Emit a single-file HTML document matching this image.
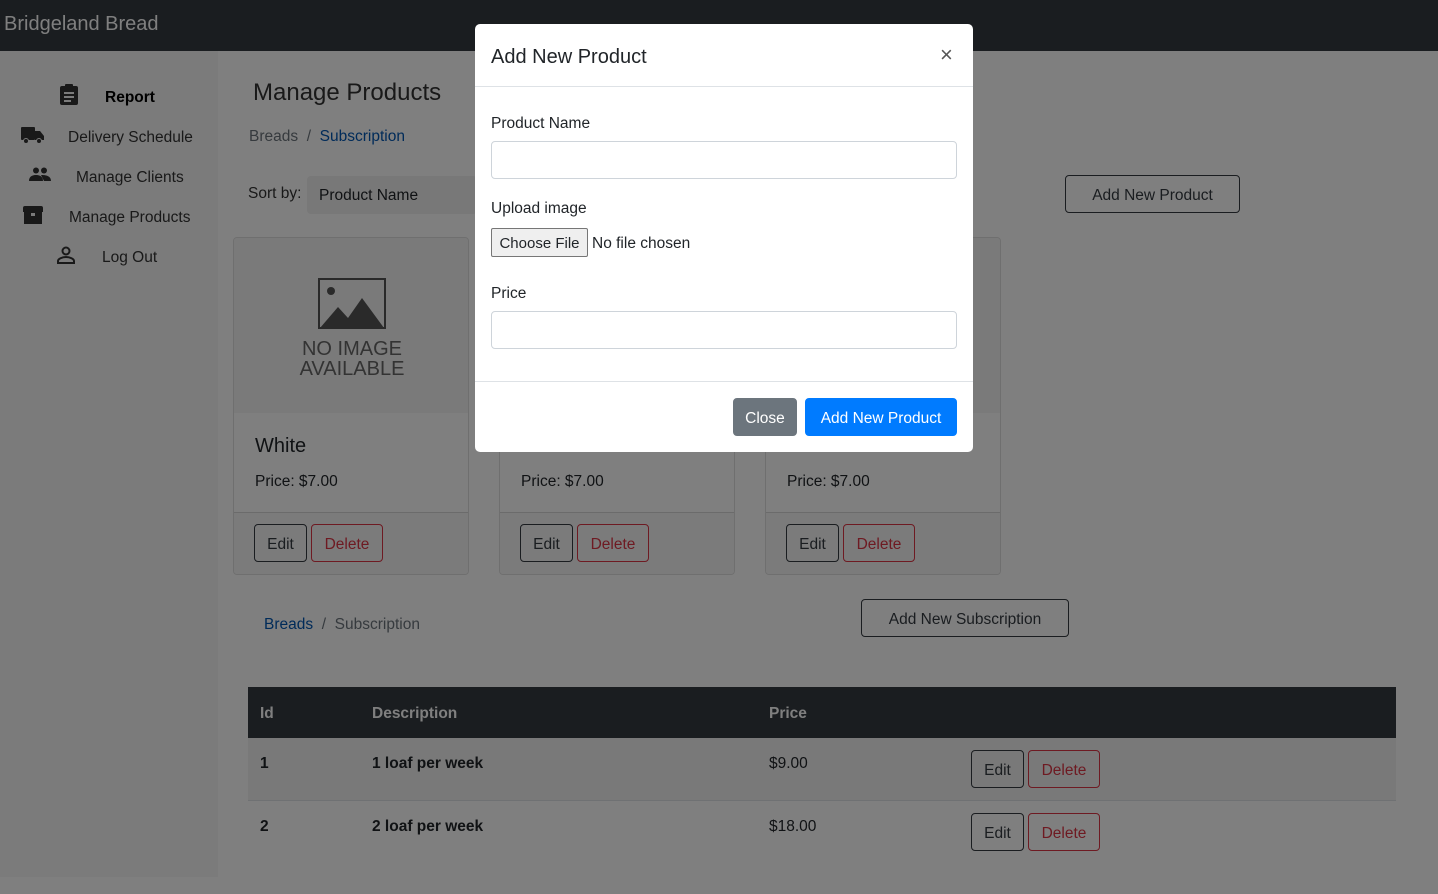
<!DOCTYPE html>
<html><head><style>
*{box-sizing:border-box;margin:0;padding:0}
body{width:1438px;height:894px;overflow:hidden;font-family:"Liberation Sans",sans-serif;background:#fff;position:relative;color:#212529}
.nav{position:absolute;left:0;top:0;width:1438px;height:51px;background:#343a40}
.nav span{position:absolute;left:4px;top:13px;font-size:20px;color:#fff}
.side{position:absolute;left:0;top:51px;width:218px;height:826px;background:#f6f6f6}
.si{position:absolute;font-size:15.5px;color:#333;margin-top:2px}
.abs{position:absolute}
.t{margin-top:2px}
.btn{position:absolute;border:1px solid #343a40;border-radius:4px;font-size:15.5px;display:flex;align-items:center;justify-content:center;color:#343a40;background:transparent;padding-top:3px;white-space:nowrap}
.del{border-color:#dc3545;color:#dc3545}
.card{position:absolute;width:236px;height:338px;border:1px solid rgba(0,0,0,.13);border-radius:4px;top:237px;overflow:hidden}
.card .img{height:175px;background:#f5f5f5}
.card .ft{position:absolute;left:0;right:0;top:274px;height:64px;background:#f7f7f7;border-top:1px solid rgba(0,0,0,.13)}
.ov{position:absolute;left:0;top:0;width:1438px;height:894px;background:rgba(0,0,0,.5)}
.modal{position:absolute;left:475px;top:24px;width:498px;height:428px;background:#fff;border-radius:5px}
.inp{position:absolute;left:16px;width:466px;height:38px;border:1px solid #ced4da;border-radius:4px}
.lbl{position:absolute;left:16px;font-size:15.5px;color:#212529;margin-top:2px}
</style></head><body>
<div class="nav"><span>Bridgeland Bread</span></div>
<div class="side">
<svg class="abs" style="left:60px;top:33px" width="18" height="21" viewBox="0 0 18 21"><rect x="0" y="2" width="18" height="19" rx="2" fill="#333"/><rect x="5" y="0" width="8" height="4" rx="1" fill="#333"/><rect x="4" y="8" width="10" height="2" fill="#f6f6f6"/><rect x="4" y="12" width="10" height="2" fill="#f6f6f6"/><rect x="4" y="16" width="7" height="2" fill="#f6f6f6"/></svg>
<div class="si" style="left:105px;top:36px;font-weight:bold;color:#000">Report</div>
<svg class="abs" style="left:21px;top:76px" width="23" height="17" viewBox="0 0 23 17"><rect x="0" y="0" width="14" height="13" rx="1" fill="#333"/><path d="M14 4h5l4 5v4h-9z" fill="#333"/><circle cx="5" cy="14" r="2.5" fill="#333" stroke="#f6f6f6"/><circle cx="18" cy="14" r="2.5" fill="#333" stroke="#f6f6f6"/></svg>
<div class="si" style="left:68px;top:76px">Delivery Schedule</div>
<svg class="abs" style="left:29px;top:116px" width="22" height="14" viewBox="0 0 22 14"><circle cx="7" cy="3.5" r="3" fill="#333"/><circle cx="15" cy="3.5" r="3" fill="#333"/><path d="M0 14c0-5 4-6 7-6s7 1 7 6z M12 8c3 0 10 0 10 6h-7z" fill="#333"/></svg>
<div class="si" style="left:76px;top:116px">Manage Clients</div>
<svg class="abs" style="left:23px;top:155px" width="20" height="18" viewBox="0 0 20 18"><path d="M2 0h16a2 2 0 0 1 2 2v4h-1v12H1V6H0V2a2 2 0 0 1 2-2z" fill="#333"/><rect x="8" y="7" width="4" height="3" fill="#f6f6f6"/></svg>
<div class="si" style="left:69px;top:156px">Manage Products</div>
<svg class="abs" style="left:57px;top:195px" width="18" height="18" viewBox="0 0 18 18" fill="none" stroke="#333" stroke-width="2"><circle cx="9" cy="5" r="3.5"/><path d="M1 17v-2c0-2 4-4 8-4s8 2 8 4v2z"/></svg>
<div class="si" style="left:102px;top:196px">Log Out</div>
</div>
<div class="abs" style="left:253px;top:79px;font-size:24px;color:#333">Manage Products</div>
<div class="abs t" style="left:249px;top:126px;font-size:15.5px;color:#6c757d">Breads &nbsp;/&nbsp; <span style="color:#0056b3">Subscription</span></div>
<div class="abs t" style="left:248px;top:183px;font-size:15.5px;color:#333">Sort by:</div>
<div class="abs" style="left:307px;top:176px;width:170px;height:38px;background:#f0f0f0;border-radius:4px;font-size:15.5px;padding:11px 12px">Product Name</div>
<div class="btn" style="left:1065px;top:175px;width:175px;height:38px">Add New Product</div>
<div class="card" style="left:233px">
<div class="img"><svg class="abs" style="left:84px;top:40px" width="68" height="51" viewBox="0 0 68 51"><rect x="1" y="1" width="66" height="49" fill="none" stroke="#555" stroke-width="2"/><circle cx="13" cy="13" r="4" fill="#555"/><path d="M2 50l18-21 10 11 14-20 22 30z" fill="#555"/></svg>
<div class="abs" style="left:0;width:236px;top:101px;text-align:center;font-size:20px;line-height:20px;color:#666">NO IMAGE<br>AVAILABLE</div></div>
<div class="abs t" style="left:21px;top:195px;font-size:20px">White</div>
<div class="abs t" style="left:21px;top:233px;font-size:15.5px">Price: $7.00</div>
<div class="ft"></div>
</div>
<div class="card" style="left:499px"><div class="img"></div><div class="abs t" style="left:21px;top:233px;font-size:15.5px">Price: $7.00</div><div class="ft"></div></div>
<div class="card" style="left:765px"><div class="img"></div><div class="abs t" style="left:21px;top:233px;font-size:15.5px">Price: $7.00</div><div class="ft"></div></div>
<div class="btn" style="left:254px;top:524px;width:53px;height:38px">Edit</div><div class="btn del" style="left:311px;top:524px;width:72px;height:38px">Delete</div>
<div class="btn" style="left:520px;top:524px;width:53px;height:38px">Edit</div><div class="btn del" style="left:577px;top:524px;width:72px;height:38px">Delete</div>
<div class="btn" style="left:786px;top:524px;width:53px;height:38px">Edit</div><div class="btn del" style="left:843px;top:524px;width:72px;height:38px">Delete</div>
<div class="abs t" style="left:264px;top:614px;font-size:15.5px;color:#6c757d"><span style="color:#0056b3">Breads</span> &nbsp;/&nbsp; Subscription</div>
<div class="btn" style="left:861px;top:599px;width:208px;height:38px">Add New Subscription</div>
<div class="abs" style="left:248px;top:687px;width:1148px;height:51px;background:#343a40"></div>
<div class="abs" style="left:248px;top:738px;width:1148px;height:63px;background:#f2f2f2;border-bottom:1px solid #dee2e6"></div>
<div class="abs t" style="left:260px;top:703px;font-size:15.5px;font-weight:bold;color:#fff">Id</div>
<div class="abs t" style="left:372px;top:703px;font-size:15.5px;font-weight:bold;color:#fff">Description</div>
<div class="abs t" style="left:769px;top:703px;font-size:15.5px;font-weight:bold;color:#fff">Price</div>
<div class="abs t" style="left:260px;top:753px;font-size:15.5px;font-weight:bold">1</div>
<div class="abs t" style="left:372px;top:753px;font-size:15.5px;font-weight:bold">1 loaf per week</div>
<div class="abs t" style="left:769px;top:753px;font-size:15.5px">$9.00</div>
<div class="abs t" style="left:260px;top:816px;font-size:15.5px;font-weight:bold">2</div>
<div class="abs t" style="left:372px;top:816px;font-size:15.5px;font-weight:bold">2 loaf per week</div>
<div class="abs t" style="left:769px;top:816px;font-size:15.5px">$18.00</div>
<div class="btn" style="left:971px;top:750px;width:53px;height:38px">Edit</div><div class="btn del" style="left:1028px;top:750px;width:72px;height:38px">Delete</div>
<div class="btn" style="left:971px;top:813px;width:53px;height:38px">Edit</div><div class="btn del" style="left:1028px;top:813px;width:72px;height:38px">Delete</div>
<div class="ov"></div>
<div class="modal">
<div class="abs" style="left:16px;top:22px;font-size:20px">Add New Product</div>
<div class="abs" style="left:465px;top:18px;font-size:22px;color:#555">×</div>
<div class="abs" style="left:0;top:62px;width:498px;border-top:1px solid #dee2e6"></div>
<div class="lbl" style="top:89px">Product Name</div>
<div class="inp" style="top:117px"></div>
<div class="lbl" style="top:174px">Upload image</div>
<div class="abs" style="left:16px;top:204px;width:97px;height:29px;border:1px solid #767676;border-radius:2px;background:#efefef;font-size:15px;padding:6px 0;text-align:center;white-space:nowrap">Choose File</div>
<div class="abs t" style="left:117px;top:209px;font-size:15.5px">No file chosen</div>
<div class="lbl" style="top:259px">Price</div>
<div class="inp" style="top:287px"></div>
<div class="abs" style="left:0;top:357px;width:498px;border-top:1px solid #dee2e6"></div>
<div class="btn" style="left:258px;top:374px;width:64px;height:38px;background:#6c757d;border-color:#6c757d;color:#fff">Close</div>
<div class="btn" style="left:330px;top:374px;width:152px;height:38px;background:#007bff;border-color:#007bff;color:#fff">Add New Product</div>
</div>
</body></html>
